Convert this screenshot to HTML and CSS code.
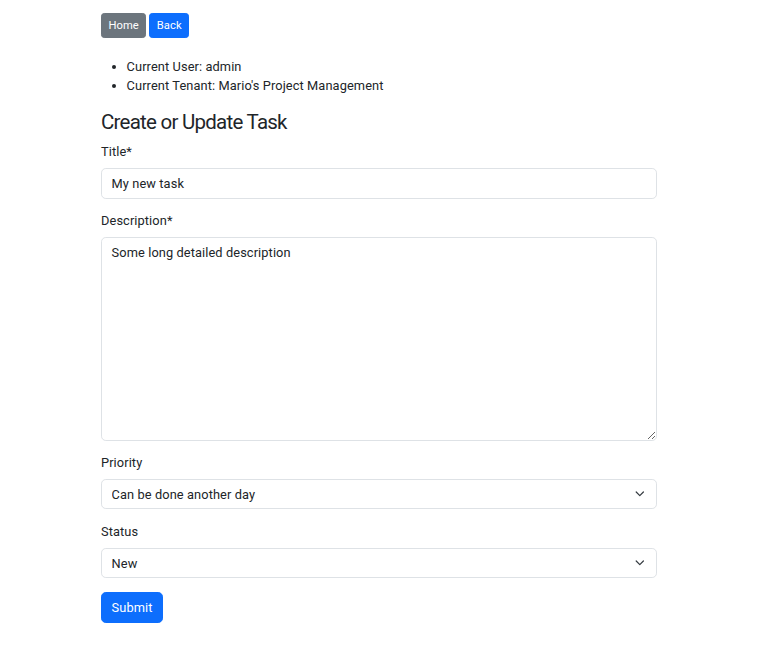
FILE: index.html
```html
<!DOCTYPE html>
<html lang="en">
<head>
<meta charset="utf-8">
<title>Create or Update Task</title>
<link rel="stylesheet" href="styles.css">
</head>
<body>
<div class="container">
  <nav class="nav">
    <a class="btn btn-sm btn-secondary" href="#">Home</a>
    <a class="btn btn-sm btn-primary" href="#">Back</a>
  </nav>
  <ul class="info">
    <li>Current User: admin</li>
    <li>Current Tenant: Mario's Project Management</li>
  </ul>
  <h3 class="title">Create or Update Task</h3>
  <form class="form">
    <div class="field">
      <label class="form-label" for="title">Title*</label>
      <input class="form-control" id="title" type="text" value="My new task">
    </div>
    <div class="field">
      <label class="form-label" for="desc">Description*</label>
      <textarea class="form-control textarea" id="desc" rows="10">Some long detailed description</textarea>
    </div>
    <div class="field">
      <label class="form-label" for="prio">Priority</label>
      <div class="select-wrap">
        <select class="form-control form-select" id="prio">
          <option>Can be done another day</option>
        </select>
        <svg class="chevron" viewBox="0 0 16 16" width="10" height="10"><path d="m2 5 6 6 6-6" fill="none" stroke="#343a40" stroke-linecap="round" stroke-linejoin="round" stroke-width="2"/></svg>
      </div>
    </div>
    <div class="field">
      <label class="form-label" for="status">Status</label>
      <div class="select-wrap">
        <select class="form-control form-select" id="status">
          <option>New</option>
        </select>
        <svg class="chevron" viewBox="0 0 16 16" width="10" height="10"><path d="m2 5 6 6 6-6" fill="none" stroke="#343a40" stroke-linecap="round" stroke-linejoin="round" stroke-width="2"/></svg>
      </div>
    </div>
    <button class="btn btn-primary btn-submit" type="button">Submit</button>
  </form>
</div>
</body>
</html>
```

FILE: styles.css
```css
* { box-sizing: border-box; }
html, body { margin: 0; padding: 0; background: #fff; }
body {
  font-family: Roboto, "Liberation Sans", sans-serif;
  font-size: 12.8px;
  line-height: 19.2px;
  letter-spacing: 0.1px;
  color: #212529;
}
.container {
  width: 556px;
  margin: 0 auto;
  padding-top: 13px;
}
.nav {
  display: flex;
  gap: 3px;
  margin-bottom: 18.5px;
}
.btn {
  display: inline-block;
  border: 1px solid transparent;
  color: #fff;
  text-decoration: none;
  font-family: inherit;
  letter-spacing: inherit;
  cursor: pointer;
}
.btn-sm {
  font-size: 11.2px;
  line-height: 16.8px;
  padding: 3.9px 6.4px 2.5px;
  border-radius: 3.2px;
}
.btn-secondary { background: #6c757d; border-color: #6c757d; }
.btn-primary { background: #0d6efd; border-color: #0d6efd; }
.info {
  margin: 0 0 13.8px;
  padding-left: 25.6px;
}
.title {
  font-size: 20.5px;
  line-height: 26.9px;
  letter-spacing: -0.75px;
  font-weight: 400;
  margin: 0 0 6.4px;
}
.form { margin: 1px 0 0; }
.field { margin-bottom: 12.8px; }
.form-label {
  display: block;
  margin-bottom: 6.4px;
}
.form-control {
  display: block;
  width: 100%;
  font-family: inherit;
  font-size: 12.8px;
  line-height: 19.2px;
  letter-spacing: inherit;
  color: #212529;
  background: #fff;
  border: 1px solid #dee2e6;
  border-radius: 4.8px;
  padding: 4.8px 9.6px;
  margin: 0;
}
.textarea {
  height: 203.6px;
  resize: vertical;
}
.select-wrap { position: relative; }
.form-select {
  appearance: none;
  -webkit-appearance: none;
  height: 30.4px;
  padding-right: 36px;
}
.chevron {
  position: absolute;
  width: 9.6px;
  height: 9.6px;
  right: 12.2px;
  top: 10.4px;
  pointer-events: none;
}
.btn-submit {
  margin-top: 1px;
  font-size: 12.8px;
  line-height: 19.2px;
  padding: 4.8px 9.6px;
  border-radius: 4.8px;
}
```
